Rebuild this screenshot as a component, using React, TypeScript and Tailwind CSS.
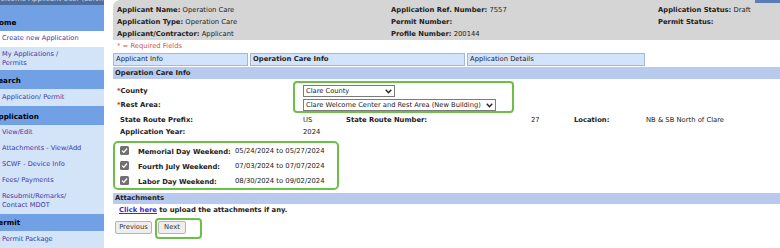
import React from 'react';

const font = { fontFamily: '"DejaVu Sans", Verdana, sans-serif' };

type NavItem = { label: string[]; kind: 'head' | 'item'; white?: boolean; h: number };

const nav: NavItem[] = [
  { label: ['Home'], kind: 'head', h: 26 },
  { label: ['Create new Application'], kind: 'item', white: true, h: 16 },
  { label: ['My Applications /', 'Permits'], kind: 'item', h: 24 },
  { label: ['Search'], kind: 'head', h: 19 },
  { label: ['Application/ Permit'], kind: 'item', h: 17 },
  { label: ['Application'], kind: 'head', h: 19 },
  { label: ['View/Edit'], kind: 'item', h: 16 },
  { label: ['Attachments - View/Add'], kind: 'item', h: 15 },
  { label: ['SCWF - Device Info'], kind: 'item', h: 17 },
  { label: ['Fees/ Payments'], kind: 'item', h: 16 },
  { label: ['Resubmit/Remarks/', 'Contact MDOT'], kind: 'item', h: 26 },
  { label: ['Permit'], kind: 'head', h: 17 },
  { label: ['Permit Package'], kind: 'item', h: 17 },
];

const Sidebar = () => (
  <div className="w-[104px] shrink-0 flex flex-col overflow-hidden">
    <div className="h-[5px] bg-[#4d6d9f] overflow-hidden">
      <div className="text-[7px] leading-[10px] text-[#c9d6ea] -mt-[6px] -ml-[6px] whitespace-nowrap">
        Welcome Applicant User (Lerch)
      </div>
    </div>
    {nav.map((n, i) =>
      n.kind === 'head' ? (
        <div
          key={i}
          style={{ height: n.h }}
          className="bg-[#72a0e4] flex items-end pb-[3px] text-[7.2px] leading-[10px] font-bold text-black whitespace-nowrap"
        >
          <span className="-ml-[7px]">{n.label[0]}</span>
        </div>
      ) : (
        <div
          key={i}
          style={{ height: n.h }}
          className={`${n.white ? 'bg-white' : 'bg-[#d3e3f8]'} flex flex-col justify-center pl-[2px] text-[6.6px] leading-[9px] text-[#3f37a3] whitespace-nowrap`}
        >
          {n.label.map((l) => (
            <span key={l}>{l}</span>
          ))}
        </div>
      )
    )}
  </div>
);

const Select = ({ text, w }: { text: string; w: number }) => (
  <div
    style={{ width: w }}
    className="h-[12px] bg-white border border-[#7b7b7b] flex items-center justify-between pl-[2px] pr-[2px] text-[6.7px] leading-[10px] text-[#222]"
  >
    <span className="whitespace-nowrap overflow-hidden">{text}</span>
    <svg width="7" height="5" viewBox="0 0 7 5" className="shrink-0">
      <path d="M0.8 0.8 L3.5 3.8 L6.2 0.8" stroke="#222" strokeWidth="1.4" fill="none" />
    </svg>
  </div>
);

const Check = () => (
  <div className="w-[9px] h-[9px] rounded-[1.5px] bg-[#707070] flex items-center justify-center shrink-0">
    <svg width="7" height="7" viewBox="0 0 7 7">
      <path d="M1 3.6 L2.8 5.3 L6 1.5" stroke="#fff" strokeWidth="1.3" fill="none" />
    </svg>
  </div>
);

const holidays = [
  { label: 'Memorial Day Weekend:', dates: '05/24/2024 to 05/27/2024' },
  { label: 'Fourth July Weekend:', dates: '07/03/2024 to 07/07/2024' },
  { label: 'Labor Day Weekend:', dates: '08/30/2024 to 09/02/2024' },
];

export default function App() {
  return (
    <div style={font} className="w-[780px] h-[248px] flex bg-white overflow-hidden text-[#222]">
      <Sidebar />
      <div className="flex-1 ml-[9px] flex flex-col text-[6.8px] leading-[12px]">
        {/* Header panel */}
        <div className="relative h-[40px] bg-[#d5d5d5] rounded-tl-[7px] pt-[4px] pl-[4px] grid grid-cols-[274px_267px_1fr]">
          <div className="absolute top-0 right-0 w-[25px] h-[3px] bg-[#5a7db5]" />
          <div>
            <div><b>Applicant Name:</b> Operation Care</div>
            <div><b>Application Type:</b> Operation Care</div>
            <div><b>Applicant/Contractor:</b> Applicant</div>
          </div>
          <div>
            <div><b>Application Ref. Number:</b> 7557</div>
            <div><b>Permit Number:</b></div>
            <div><b>Profile Number:</b> 200144</div>
          </div>
          <div>
            <div><b>Application Status:</b> Draft</div>
            <div><b>Permit Status:</b></div>
          </div>
        </div>

        <div className="pl-[4px] h-[12px] text-[#d0554f]">* = Required Fields</div>

        {/* Tabs */}
        <div className="mt-[1px] h-[13px] flex gap-[2px]">
          <div className="w-[135px] bg-[#d2e4fb] border border-[#a3b8d6] pl-[2px] leading-[11px]">Applicant Info</div>
          <div className="w-[215px] bg-[#d2e4fb] border border-[#a3b8d6] pl-[2px] leading-[11px] font-bold">Operation Care Info</div>
          <div className="w-[178px] bg-[#d2e4fb] border border-[#a3b8d6] pl-[2px] leading-[11px]">Application Details</div>
        </div>

        <div className="mt-[1px] h-[12px] bg-[#b8cbef] pl-[2px] font-bold">Operation Care Info</div>

        {/* County / Rest area */}
        <div className="mt-[2px] flex">
          <div className="w-[180px] pl-[4px] pt-[4px] font-bold flex flex-col gap-[2px]">
            <div><span className="text-[#d0312d]">*</span>County</div>
            <div><span className="text-[#d0312d]">*</span>Rest Area:</div>
          </div>
          <div className="w-[221px] h-[32px] border-2 border-[#6cc04a] rounded-[4px] pl-[8px] pt-[2px] flex flex-col gap-[2px]">
            <Select text="Clare County" w={92} />
            <Select text="Clare Welcome Center and Rest Area (New Building)" w={193} />
          </div>
        </div>

        <div className="pl-[7px] mt-[1px] grid grid-cols-[183px_43px_185px_43px_72px_1fr]">
          <b>State Route Prefix:</b>
          <span>US</span>
          <b>State Route Number:</b>
          <span>27</span>
          <b>Location:</b>
          <span>NB &amp; SB North of Clare</span>
        </div>
        <div className="pl-[7px] grid grid-cols-[183px_1fr]">
          <b>Application Year:</b>
          <span>2024</span>
        </div>

        {/* Holidays */}
        <div className="mt-[3px] w-[226px] h-[49px] border-2 border-[#6cc04a] rounded-[5px] pl-[5px] flex flex-col justify-center">
          {holidays.map((h) => (
            <div key={h.label} className="h-[15px] flex items-center">
              <Check />
              <b className="ml-[9px] w-[97px] mt-[3px] whitespace-nowrap">{h.label}</b>
              <span className="whitespace-nowrap">{h.dates}</span>
            </div>
          ))}
        </div>

        <div className="mt-[3px] h-[11px] leading-[11px] bg-[#b8cbef] pl-[2px] font-bold">Attachments</div>
        <div className="pl-[6px] font-bold">
          <span className="text-[#3b2ad6] underline">Click here</span> to upload the attachments if any.
        </div>

        <div className="mt-[2px] pl-[2px] flex items-start gap-[3px]">
          <button className="mt-[3px] w-[37px] h-[13px] bg-[#eeeeee] border border-[#b5b5b5] rounded-[2px] text-[6.8px] leading-[11px] text-[#333]">
            Previous
          </button>
          <div className="w-[47px] h-[21px] border-2 border-[#6cc04a] rounded-[4px] pl-[1px] pt-[1px]">
            <button className="w-[28px] h-[13px] bg-[#eeeeee] border border-[#b5b5b5] rounded-[2px] text-[6.8px] leading-[11px] text-[#333]">
              Next
            </button>
          </div>
        </div>
      </div>
    </div>
  );
}
